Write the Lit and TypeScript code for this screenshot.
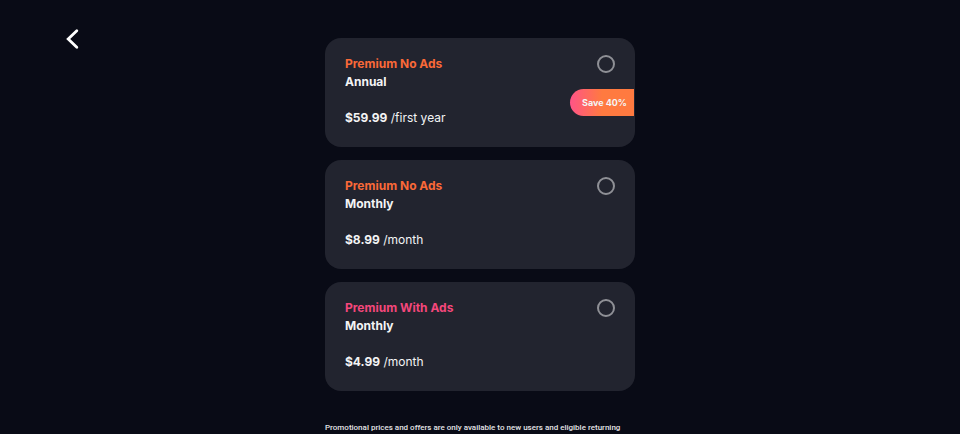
import { LitElement, html, css, nothing } from "lit";
import { customElement, property, state } from "lit/decorators.js";
import { classMap } from "lit/directives/class-map.js";

interface Plan {
  id: string;
  name: string;
  term: string;
  price: string;
  period: string;
  tone: "orange" | "pink";
  badge?: string;
}

const PLANS: Plan[] = [
  { id: "annual", name: "Premium No Ads", term: "Annual", price: "$59.99", period: "/first year", tone: "orange", badge: "Save 40%" },
  { id: "monthly", name: "Premium No Ads", term: "Monthly", price: "$8.99", period: "/month", tone: "orange" },
  { id: "monthly-ads", name: "Premium With Ads", term: "Monthly", price: "$4.99", period: "/month", tone: "pink" },
];

@customElement("plan-card")
export class PlanCard extends LitElement {
  @property({ attribute: false }) plan!: Plan;
  @property({ type: Boolean }) selected = false;

  static styles = css`
    :host {
      display: block;
    }
    .card {
      position: relative;
      display: flex;
      justify-content: space-between;
      align-items: flex-start;
      padding: 17px 20px 20px;
      border-radius: 16px;
      background: #22242f;
      font-size: 12px;
      line-height: 18px;
      color: #f4f4f5;
      cursor: pointer;
    }
    .name,
    .term,
    .price {
      font-weight: 700;
    }
    .name,
    .term {
      display: block;
    }
    .orange {
      color: #fa6938;
    }
    .pink {
      color: #f4477b;
    }
    .cost {
      display: block;
      margin-top: 18px;
    }
    .radio {
      appearance: none;
      box-sizing: border-box;
      width: 18px;
      height: 18px;
      margin: 0;
      border: 2px solid #8f9096;
      border-radius: 50%;
      cursor: pointer;
    }
    .radio:checked {
      border: 5px solid #fa6938;
    }
    .badge {
      position: absolute;
      right: 1px;
      top: 51px;
      padding: 0 7px 0 12px;
      border-radius: 14px 0 0 14px;
      background: linear-gradient(90deg, #ff5487, #ff7a40 50%);
      font-size: 9px;
      font-weight: 700;
      line-height: 27px;
    }
  `;

  private choose() {
    this.dispatchEvent(new CustomEvent("choose", { detail: this.plan.id }));
  }

  render() {
    const { id, name, term, price, period, tone, badge } = this.plan;
    return html`
      <label class="card" for=${id}>
        <span>
          <span class=${classMap({ name: true, [tone]: true })}>${name}</span>
          <span class="term">${term}</span>
          <span class="cost"><span class="price">${price}</span> ${period}</span>
        </span>
        <input class="radio" type="radio" id=${id} name="plan" .checked=${this.selected} @change=${this.choose} />
        ${badge ? html`<span class="badge">${badge}</span>` : nothing}
      </label>
    `;
  }
}

@customElement("app-root")
export class AppRoot extends LitElement {
  @state() private selected = "";

  static styles = css`
    :host {
      display: block;
      box-sizing: border-box;
      min-height: 100vh;
      background: #090b16;
      font-family: Inter, "Liberation Sans", sans-serif;
    }
    .page {
      display: grid;
      grid-template-columns: 1fr minmax(0, 310px) 1fr;
    }
    .back {
      justify-self: start;
      align-self: start;
      display: flex;
      margin: 27px 0 0 60px;
      padding: 0;
      border: 0;
      background: none;
      color: #fff;
      cursor: pointer;
    }
    .plans {
      display: flex;
      flex-direction: column;
      gap: 13px;
      padding-top: 38px;
    }
    .terms {
      margin: 18px 0 0;
      font-family: Roboto, "Liberation Sans", sans-serif;
      font-size: 8px;
      font-weight: 500;
      line-height: 12px;
      color: #e4e4e6;
    }
  `;

  render() {
    return html`
      <main class="page">
        <button class="back" aria-label="Back">
          <svg width="24" height="24" viewBox="0 0 24 24" fill="none" stroke="currentColor" stroke-width="2.8" stroke-linecap="round" aria-hidden="true">
            <path d="M16.8 3.8 8.2 12l8.6 8.2" />
          </svg>
        </button>
        <section class="plans" aria-label="Plans">
          ${PLANS.map(
            (plan) => html`<plan-card
              .plan=${plan}
              .selected=${this.selected === plan.id}
              @choose=${(e: CustomEvent<string>) => (this.selected = e.detail)}
            ></plan-card>`
          )}
          <p class="terms">Promotional prices and offers are only available to new users and eligible returning</p>
        </section>
      </main>
    `;
  }
}
